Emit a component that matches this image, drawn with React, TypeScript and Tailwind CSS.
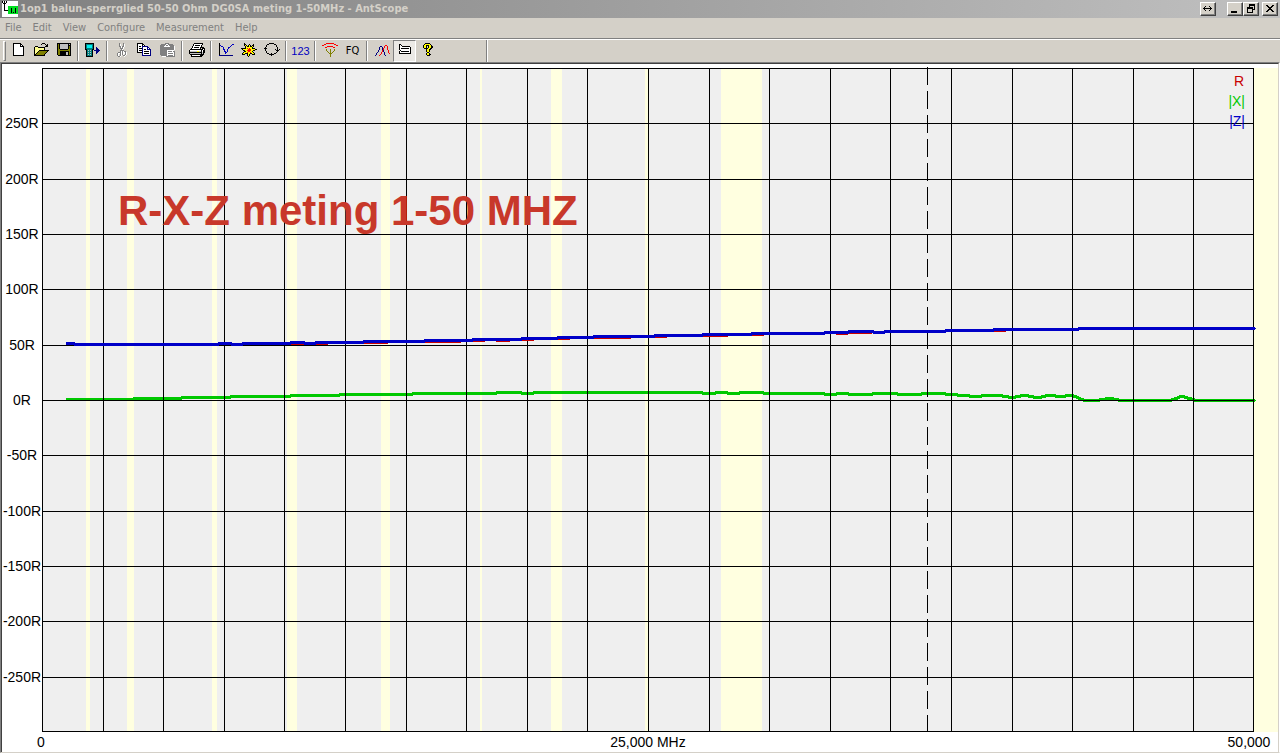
import React from 'react';

const PALETTE: Record<string, string> = {
  K: '#000000',
  W: '#ffffff',
  Y: '#ffff00',
  P: '#ffff90',
  O: '#808000',
  G: '#808080',
  S: '#c0c0c0',
  B: '#0000c0',
  N: '#000080',
  C: '#00f0f0',
  T: '#008080',
  R: '#ff0000',
  L: '#00e020',
};

const ICONS = {
  app: [
    'KWKWKWWWWWWWWWWW',
    'KWKWKWWWWWWWWWWW',
    'WKKKWWWWWWWWWWWW',
    'WWKWWWWWWWWWWWWW',
    'WWKWWWWWWWWWWWWW',
    'WWKWWWLLLLLLLLLL',
    'WWKWWWLLLLLLLLLL',
    'WWKWWWLLLKLLLKLL',
    'WWKWWWLLLKLLLKLL',
    'WWKKKKLLLKLLLKLL',
    'WWWWWWLLLKLLLKLL',
    'WWWWWWLLLKLKLKLL',
    'WWWWWWLLLLLLLLLL',
    'WWWWWWWWWWWWWWWW',
    'WWWWWWWWWWWWWWWW',
    'WWWWWWWWWWWWWWWW',
  ],
  newFile: [
    '...KKKKKKKK.....',
    '...KWWWWWWKK....',
    '...KWWWWWWKWK...',
    '...KWWWWWWKKKK..',
    '...KWWWWWWWWWK..',
    '...KWWWWWWWWWK..',
    '...KWWWWWWWWWK..',
    '...KWWWWWWWWWK..',
    '...KWWWWWWWWWK..',
    '...KWWWWWWWWWK..',
    '...KWWWWWWWWWK..',
    '...KWWWWWWWWWK..',
    '...KKKKKKKKKKK..',
  ],
  open: [
    '.........KKK....',
    '........K...K.K.',
    '.............KK.',
    '..KKK.......KKK.',
    '.KPPPKKKKKKK....',
    '.KPPPPPPPPPK....',
    '.KPPPPPPPPPK....',
    '.KPPPPKKKKKKKKKK',
    '.KPPPKOOOOOOOOK.',
    '.KPPKOOOOOOOOK..',
    '.KPKOOOOOOOOK...',
    '.KKOOOOOOOOK....',
    '.KKKKKKKKKKK....',
  ],
  save: [
    '.KKKKKKKKKKKKKK.',
    '.KOKSSSSSSSSKSK.',
    '.KOKSSSSSSSSKKK.',
    '.KOKSSSSSSSSKOK.',
    '.KOKSSSSSSSSKOK.',
    '.KOKSSSSSSSSKOK.',
    '.KOOKKKKKKKKOOK.',
    '.KOOOOOOOOOOOOK.',
    '.KOOKKKKKKKKKOK.',
    '.KOOKKKKKKSSKOK.',
    '.KOOKKKKKKSSKOK.',
    '.KOOKKKKKKSSKOK.',
    '..KKKKKKKKKKKKK.',
  ],
  device: [
    'KKKKKKKKK.......',
    'KTTTTTTTK.......',
    'KTCCCCCTK.......',
    'KTCCCCCTK.......',
    'KTCCCCCTK..N....',
    'KTTTTTTTK..NN...',
    'KKTTTTTKK..NNN..',
    '.KTSTSTK.NNNNNN.',
    '.KTTTTTK...NNN..',
    '.KTSTSTK...NN...',
    '.KTTTTTK...N....',
    '.KTSTSTK........',
    '.KTTTTTK........',
    '.KKKKKKK........',
  ],
  cut: [
    '.....G...G......',
    '.....GW..GW.....',
    '.....GW..GW.....',
    '.....GGWGGW.....',
    '......GWGW......',
    '......GGGW......',
    '.......GW.......',
    '......GGGG......',
    '......GWGWGG....',
    '....GGGWGWWGW...',
    '...GWWGWGWWGW...',
    '...GW.GWGW.GW...',
    '...GW.GW.GGW....',
    '....GGW...W.....',
  ],
  copy: [
    'KKKKKK..........',
    'KWWWWKK.........',
    'KWWWWKWK........',
    'KWKKWNNNNNN.....',
    'KWWWWNWWWWNN....',
    'KWKKKNWWWWNWN...',
    'KWWWWNWKKWNNNN..',
    'KWKKKNWWWWWWWN..',
    'KWWWWNWKKKKKWN..',
    'KKKKKNWWWWWWWN..',
    '.....NWKKKKKWN..',
    '.....NWWWWWWWN..',
    '.....NNNNNNNNN..',
  ],
  paste: [
    '.....GGGG.......',
    '.GGGGGWWGGGGG...',
    'GGGGGWGGWGGGGG..',
    'GGGGWWWWWWGGGGW.',
    'GGGGGGGGGGGGGGW.',
    'GGGGGGGGGGGGGGW.',
    'GGGGGGGGGGGGGGW.',
    'GGGGGGGWWWWWWW..',
    'GGGGGGGWGGGGWGG.',
    'GGGGGGGWWWWWWWG.',
    'GGGGGGGWGGGGGWG.',
    'GGGGGGGWWWWWWWG.',
    '.GGGGGGWGGGGGWG.',
    '..WWWWGGGGGGGGG.',
  ],
  print: [
    '.....KKKKKKKKK..',
    '....KWWWWWWWWK..',
    '....KWKKKKKWK...',
    '...KWWWWWWWWK...',
    '...KWKKKKKWKKKK.',
    '..KWWWWWWWWK.KKK',
    '.KKKKKKKKKKKKKWK',
    'KWWWWWWWWWWWKWKK',
    'KSSSSSSSYYSSKWKK',
    'KKKKKKKKKKKKKSKK',
    'KSSSSSSSSSSSKSK.',
    '.KKKKKKKKKKKKKK.',
    '..KWWWWWWWWKKK..',
    '..KKKKKKKKKKK...',
  ],
  graph: [
    '.K..............',
    '.K............BB',
    '.KB..........B..',
    '.K.BB.......B...',
    '.K...B....BB....',
    '.K...B....B.....',
    '.K...BB..B......',
    '.K....B..B......',
    '.K....BB.B......',
    '.K.....BB.......',
    '.K.....B........',
    '.K..............',
    '.NNNNNNNNNNNNNN.',
  ],
  spark: [
    '...K............',
    '...KK...K...K...',
    '...KYK.KYK.KK...',
    '....KYKKYKKYK...',
    '....KYYYYYYK....',
    'KKKKKYRYRYYKKK..',
    '.KYYYYYRRRYYYYKK',
    '..KKYYRRRRYYKK..',
    '...KKYYRRYYK....',
    '..KYYYRYYRYYK...',
    '.KYYKKKYYKKYYK..',
    '.KKK..KYK..KKK..',
    '......KYK.......',
    '.......K........',
  ],
  cycle: [
    '.....KKKKK......',
    '...KK.....KK....',
    '..K.........K...',
    '..K.........K...',
    '.K...........K..',
    'KKK..........K..',
    '.K.........K.K.K',
    '.K..........KKK.',
    '..K..........K..',
    '..K.........K...',
    '...KK..K..KK....',
    '.....KKKKK......',
    '.......K........',
  ],
  antenna: [
    '....RRRRRRRR....',
    '..RR........RR..',
    'RR............RR',
    '.....RRRRRR.....',
    '...RR......RR...',
    '................',
    '....O...O...O...',
    '....O...O...O...',
    '.....O..O..O....',
    '......O.O.O.....',
    '.......OOO......',
    '........O.......',
    '........O.......',
    '........O.......',
  ],
  curves: [
    '................',
    '................',
    '...........RR...',
    '......NN..R..R..',
    '.....N..N.R..R..',
    '.....N..NR...R..',
    '.....N..NR...R..',
    '....N...RN....R.',
    '....N...RN....R.',
    '...N...R..N...R.',
    '..N....R..N....R',
    '..N...R...N.....',
    '.N...R.....N....',
  ],
  list: [
    '................',
    '..KK............',
    '..KWK...........',
    '..KWWKKKKKKKK...',
    '..KWWWWWWWWWWK..',
    '..KWKKKKKKKKWK..',
    '..KWWWWWWWWWWK..',
    '...KWWWWWWWWWK..',
    '..KWKKKKKKKKWK..',
    '..KWWWWWWWWWWK..',
    '..KKKKKKKKKKKK..',
  ],
  help: [
    '.....KKKKK......',
    '....KYYYYYK.....',
    '...KYYKKKYYK....',
    '...KYYK.KYYKK...',
    '...KYYK.KYYKK...',
    '....KKKKYYKK....',
    '......KYYKK.....',
    '......KYYK......',
    '......KYYK......',
    '.......KK.......',
    '......KYYK......',
    '......KYYKK.....',
    '.......KKK......',
  ],
};

type IconName = keyof typeof ICONS;

const PixelIcon: React.FC<{ name: IconName }> = ({ name }) => (
  <svg viewBox="0 0 16 16" className="w-4 h-4 shrink-0" shapeRendering="crispEdges" aria-hidden="true">
    {ICONS[name].flatMap((row, y) =>
      (row.match(/(.)\1*/g) ?? []).reduce<{ x: number; cells: React.ReactNode[] }>(
        (acc, run) => {
          if (run[0] !== '.') {
            acc.cells.push(
              <rect key={`${acc.x}-${y}`} x={acc.x} y={y} width={run.length} height={1} fill={PALETTE[run[0]]} />
            );
          }
          return { x: acc.x + run.length, cells: acc.cells };
        },
        { x: 0, cells: [] }
      ).cells
    )}
  </svg>
);

const raised = 'border border-t-white border-l-white border-r-[#404040] border-b-[#404040] shadow-[inset_-1px_-1px_0_#808080]';

const WindowButton: React.FC<{ label: string; className?: string; children: React.ReactNode }> = ({
  label,
  className = '',
  children,
}) => (
  <button
    type="button"
    aria-label={label}
    className={`w-4 h-3.5 flex items-center justify-center bg-[#d4d0c8] ${raised} ${className}`}
  >
    <svg viewBox="0 0 12 10" className="w-3 h-2.5 shrink-0" shapeRendering="crispEdges" fill="#000">
      {children}
    </svg>
  </button>
);

const TitleBar: React.FC = () => (
  <header className="h-[18px] pl-0.5 pr-0.5 flex items-center bg-linear-to-r from-[#808080] to-[#c0c0c0]">
    <PixelIcon name="app" />
    <h1 className="ml-0.5 grow text-[11px] leading-4 font-bold text-[#d4d0c8] whitespace-nowrap">
      1op1 balun-sperrglied 50-50 Ohm DG0SA meting 1-50MHz - AntScope
    </h1>
    <WindowButton label="Move to other screen" className="mr-[11px]">
      <path d="M1 4h9v1H1zM2 3h1v3H2zM3 2h1v1H3zM3 6h1v1H3zM8 3h1v3H8zM7 2h1v1H7zM7 6h1v1H7z" />
    </WindowButton>
    <WindowButton label="Minimize">
      <path d="M2 7h6v2H2z" />
    </WindowButton>
    <WindowButton label="Restore" className="mr-[3px]">
      <path d="M4 0h6v2H4zM9 2h1v4H9zM8 5h1v1H8zM4 2h1v1H4zM2 3h6v2H2zM2 5h1v4H2zM7 5h1v4H7zM2 8h6v1H2z" />
    </WindowButton>
    <WindowButton label="Close">
      <path d="M2 1h2v1H2zM8 1h2v1H8zM3 2h2v1H3zM7 2h2v1H7zM4 3h4v1H4zM5 4h2v1H5zM4 5h4v1H4zM3 6h2v1H3zM7 6h2v1H7zM2 7h2v1H2zM8 7h2v1H8z" />
    </WindowButton>
  </header>
);

const MENUS = ['File', 'Edit', 'View', 'Configure', 'Measurement', 'Help'];

const MenuBar: React.FC = () => (
  <nav className="h-[21px] pl-[5px] flex items-center gap-[11px] text-[11px] leading-4 text-[#808080] border-b border-[#808080]">
    {MENUS.map((menu) => (
      <button key={menu} type="button">
        {menu}
      </button>
    ))}
  </nav>
);

const Separator: React.FC = () => (
  <div className="w-1.5 h-5 flex justify-center">
    <div className="w-0.5 bg-white border-l border-[#808080]" />
  </div>
);

const ToolButton: React.FC<{ label: string; icon?: IconName; pressed?: boolean; children?: React.ReactNode }> = ({
  label,
  icon,
  pressed,
  children,
}) => (
  <button
    type="button"
    aria-label={label}
    aria-pressed={pressed}
    className={`w-[23px] h-[22px] flex items-center justify-center ${
      pressed ? 'bg-[#ebe9e5] border border-t-[#808080] border-l-[#808080] border-r-white border-b-white' : ''
    }`}
  >
    {icon ? <PixelIcon name={icon} /> : children}
  </button>
);

const Toolbar: React.FC = () => (
  <div className="h-[23px] flex items-center border-t border-white">
    <div className="w-[487px] h-full pl-[3px] flex items-center border-r border-[#808080]">
      <div className="w-[3px] h-5 border border-t-white border-l-white border-r-[#808080] border-b-[#808080]" />
      <ToolButton label="New" icon="newFile" />
      <ToolButton label="Open" icon="open" />
      <ToolButton label="Save" icon="save" />
      <Separator />
      <ToolButton label="Read device" icon="device" />
      <Separator />
      <ToolButton label="Cut" icon="cut" />
      <ToolButton label="Copy" icon="copy" />
      <ToolButton label="Paste" icon="paste" />
      <Separator />
      <ToolButton label="Print" icon="print" />
      <Separator />
      <ToolButton label="Graph" icon="graph" />
      <ToolButton label="Start" icon="spark" />
      <ToolButton label="Repeat" icon="cycle" />
      <Separator />
      <ToolButton label="Values">
        <span className="font-['Liberation_Sans',Arial,sans-serif] text-[11px] leading-4 text-[#0000c0]">123</span>
      </ToolButton>
      <Separator />
      <ToolButton label="Antenna" icon="antenna" />
      <ToolButton label="Frequency">
        <span className="text-[11px] leading-4">FQ</span>
      </ToolButton>
      <Separator />
      <ToolButton label="Curves" icon="curves" />
      <ToolButton label="Legend" icon="list" pressed />
      <ToolButton label="Help" icon="help" />
    </div>
    <div className="w-px h-full bg-white" />
  </div>
);

// [start, width] of every amateur band, in chart units
const BANDS = [
  [86, 4],
  [127, 7],
  [212, 5],
  [287, 10],
  [381, 9],
  [480, 2],
  [551, 11],
  [645, 3],
  [721, 41],
  [1254, 24],
];

const COLUMNS = [42, 103, 163, 224, 284, 345, 406, 466, 527, 587, 648, 709, 769, 830, 890, 951, 1012, 1072, 1133, 1193, 1253];

const ROWS = [
  { y: 68 },
  { y: 123, label: '250R' },
  { y: 179, label: '200R' },
  { y: 234, label: '150R' },
  { y: 289, label: '100R' },
  { y: 345, label: '50R' },
  { y: 400, label: '0R' },
  { y: 455, label: '-50R' },
  { y: 511, label: '-100R' },
  { y: 566, label: '-150R' },
  { y: 621, label: '-200R' },
  { y: 677, label: '-250R' },
  { y: 731 },
];

// traces are stepped: [x, top] holds until the next entry
const Z_TRACE = [
  [66, 342], [74, 343], [218, 342], [231, 343], [242, 342], [290, 341], [304, 342], [315, 341], [363, 340],
  [424, 339], [472, 338], [521, 337], [557, 336], [593, 335], [654, 334], [702, 333], [751, 332], [824, 331],
  [848, 330], [873, 331], [884, 330], [945, 329], [993, 328], [1078, 327],
];

const X_TRACE = [
  [66, 398], [133, 397], [181, 396], [230, 395], [290, 394], [339, 393], [412, 392], [496, 391], [521, 392],
  [533, 391], [702, 392], [715, 391], [727, 392], [739, 391], [763, 392], [824, 393], [836, 392], [848, 393],
  [872, 392], [897, 393], [921, 392], [945, 393], [957, 394], [969, 395], [981, 394], [1002, 395], [1008, 396],
  [1015, 395], [1020, 394], [1028, 395], [1033, 396], [1041, 395], [1045, 394], [1055, 395], [1065, 394],
  [1073, 395], [1076, 396], [1078, 397], [1080, 398], [1083, 399], [1099, 398], [1105, 397], [1113, 398],
  [1118, 399], [1171, 398], [1174, 397], [1177, 396], [1179, 395], [1184, 396], [1187, 397], [1191, 398],
  [1194, 399],
];

// stretches where R falls just below |Z|: [x, width, y]
const R_TRACE = [
  [291, 13, 344], [316, 12, 344], [363, 25, 343], [424, 37, 342], [472, 13, 341], [496, 14, 341], [521, 13, 340],
  [557, 13, 339], [593, 38, 338], [654, 13, 337], [702, 26, 336], [751, 13, 335], [836, 12, 334], [848, 24, 333],
  [993, 13, 331],
];

const Trace: React.FC<{ steps: number[][]; color: string }> = ({ steps, color }) => (
  <g fill={color}>
    {steps.map(([x, y], i) => (
      <rect key={x} x={x} y={y} width={(steps[i + 1]?.[0] ?? 1254) - x + 1} height={3} />
    ))}
  </g>
);

const Chart: React.FC = () => (
  <svg
    viewBox="2 64 1276 688"
    className="block w-full h-auto bg-white font-['Liberation_Sans',Arial,sans-serif] text-[14px]"
    role="img"
    aria-label="R, |X| and |Z| against frequency"
  >
    <g shapeRendering="crispEdges">
      <rect x={42} y={68} width={1212} height={664} fill="#efefef" />
      {BANDS.map(([x, width]) => (
        <rect key={x} x={x} y={68} width={width} height={664} fill="#ffffe0" />
      ))}
      <Trace steps={X_TRACE} color="#00c800" />
      {COLUMNS.map((x) => (
        <rect key={x} x={x} y={68} width={1} height={664} />
      ))}
      {ROWS.map(({ y }) => (
        <rect key={y} x={42} y={y} width={1212} height={1} />
      ))}
      <path d="M927.5 67V731" stroke="#000" strokeDasharray="18 6" />
      {R_TRACE.map(([x, width, y]) => (
        <rect key={x} x={x} y={y} width={width} height={1} fill="#c80000" />
      ))}
      <Trace steps={Z_TRACE} color="#0000c8" />
      <rect x={1254} y={328} width={2} height={1} fill="#0000c8" />
      <rect x={1254} y={400} width={2} height={1} fill="#00c800" />
    </g>
    <g textAnchor="middle">
      {ROWS.map(({ y, label }) => label && (
        <text key={y} x={22} y={y + 5}>
          {label}
        </text>
      ))}
      <text x={41} y={747}>0</text>
      <text x={648} y={747}>25,000 MHz</text>
      <text x={1249} y={747}>50,000</text>
    </g>
    <g textAnchor="end">
      <text x={1244} y={86} fill="#c80000">R</text>
      <text x={1245} y={106} fill="#00c800">|X|</text>
      <text x={1245} y={126} fill="#0000c8">|Z|</text>
    </g>
    <text x={118} y={225} className="text-[42px] font-bold" fill="#c8382a">
      R-X-Z meting 1-50 MHZ
    </text>
  </svg>
);

const App: React.FC = () => {
  return (
    <div className="bg-[#d4d0c8] font-['DejaVu_Sans_Condensed','DejaVu_Sans',sans-serif] text-black">
      <TitleBar />
      <MenuBar />
      <Toolbar />
      <main className="border-l border-t border-r border-b border-t-[#808080] border-l-[#808080] border-r-white border-b-[#d4d0c8]">
        <div className="border-l border-t border-r border-t-[#404040] border-l-[#404040] border-r-[#d4d0c8]">
          <Chart />
        </div>
      </main>
    </div>
  );
};

export default App;
